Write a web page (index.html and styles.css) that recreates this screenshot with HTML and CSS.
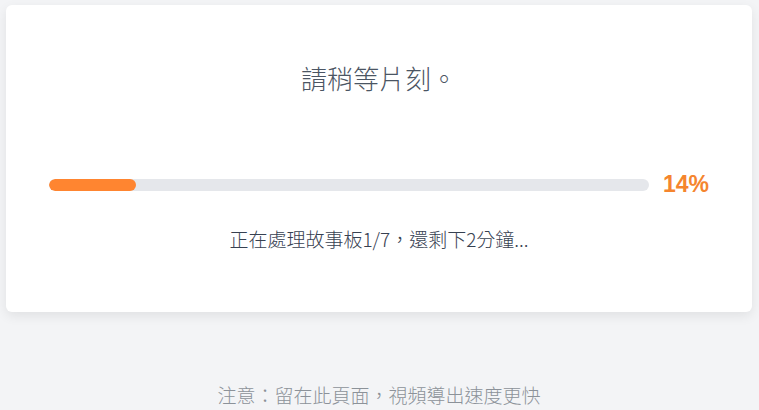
FILE: index.html
```html
<!DOCTYPE html>
<html>
<head>
    <title>導出中</title>
    <link rel="stylesheet" href="styles.css">
</head>
<body>

    <div class="card">
        <h3 class="title">請稍等片刻。</h3>
        <div class="progress-row">
            <div class="track">
                <div class="fill" style="width: 14.5%;"></div>
            </div>
            <span class="percent">14%</span>
        </div>
        <p class="status">正在處理故事板1/7，還剩下2分鐘...</p>
    </div>

    <p class="note">注意：留在此頁面，視頻導出速度更快</p>

</body>
</html>
```

FILE: styles.css
```css
body {
    margin: 0;
    padding: 5px 7px 0 6px;
    background-color: #f3f4f6;
    font-family: "Noto Sans CJK TC", "Liberation Sans", sans-serif;
    height: 410px;
    box-sizing: border-box;
    overflow: hidden;
}
.card {
    background-color: #fff;
    border-radius: 6px;
    box-shadow: 0 4px 12px rgba(0, 0, 0, 0.08);
    height: 307px;
    box-sizing: border-box;
    padding: 56px 43px 0 43px;
}
.title {
    margin: 0;
    text-align: center;
    font-size: 26px;
    font-weight: 300;
    line-height: 34px;
    color: #4b5563;
}
.progress-row {
    display: flex;
    align-items: center;
    gap: 14px;
    margin-top: 76px;
}
.track {
    flex: 1;
    height: 12px;
    background-color: #e5e7eb;
    border-radius: 6px;
    overflow: hidden;
}
.fill {
    height: 100%;
    background-color: #ff8530;
    border-radius: 6px;
}
.percent {
    width: 46px;
    font-family: "Liberation Sans", sans-serif;
    font-size: 23px;
    font-weight: bold;
    color: #f5852e;
}
.status {
    margin: 28px 0 0 0;
    text-align: center;
    font-size: 19px;
    font-weight: 300;
    line-height: 26px;
    color: #374151;
}
.note {
    margin: 70px 0 0 0;
    text-align: center;
    font-size: 19px;
    font-weight: 300;
    line-height: 26px;
    color: #8c9299;
}
```
